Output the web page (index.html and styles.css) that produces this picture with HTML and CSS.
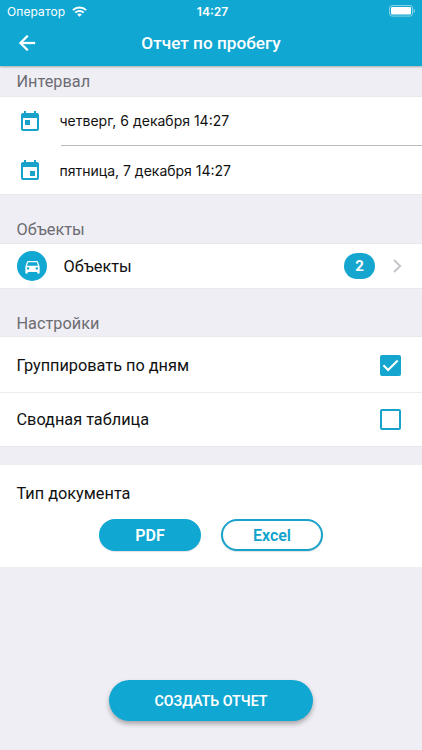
FILE: index.html
```html
<!DOCTYPE html>
<html lang="ru">
<head>
<meta charset="utf-8">
<title>Отчет по пробегу</title>
<link rel="stylesheet" href="styles.css">
</head>
<body>
<header class="header">
  <div class="status">
    <div class="carrier"><span>Оператор</span>
      <svg width="15" height="11" viewBox="0 0 15 11" fill="none" stroke="#fff" stroke-width="2"><path d="M.9 4.1a9.4 9.4 0 0 1 13.2 0M3.3 6.6a6 6 0 0 1 8.4 0"/><path d="M7.5 10.8 5.2 8.5a3.3 3.3 0 0 1 4.6 0z" fill="#fff" stroke="none"/></svg>
    </div>
    <span class="clock">14:27</span>
    <svg class="battery" width="27" height="12" viewBox="0 0 27 12"><rect x=".5" y=".5" width="23" height="10.6" rx="2.5" fill="none" stroke="#fff" stroke-opacity=".5"/><rect x="2" y="2" width="20" height="7.6" rx="1" fill="#fff"/><path d="M24.7 4v4q1.4-.5 1.4-2t-1.4-2z" fill="#fff" fill-opacity=".5"/></svg>
  </div>
  <div class="nav">
    <svg class="back" width="24" height="24" viewBox="0 0 24 24" fill="#fff" stroke="#fff" stroke-width=".3"><path d="M20 11H7.83l5.59-5.59L12 4l-8 8 8 8 1.41-1.41L7.83 13H20v-2z"/></svg>
    <h1>Отчет по пробегу</h1>
  </div>
</header>
<main>
  <h2 class="label label-first">Интервал</h2>
  <section class="dates">
    <div class="date">
      <svg width="24" height="24" viewBox="0 0 24 24"><path d="M19 3h-1V1h-2v2H8V1H6v2H5c-1.11 0-1.99.9-1.99 2L3 19c0 1.1.89 2 2 2h14c1.1 0 2-.9 2-2V5c0-1.1-.9-2-2-2zm0 16H5V8h14v11zM7 10h5v5H7z"/></svg>
      <span>четверг, 6 декабря 14:27</span>
    </div>
    <div class="date date-end">
      <svg width="24" height="24" viewBox="0 0 24 24"><path d="M17 12h-5v5h5v-5zM16 1v2H8V1H6v2H5c-1.11 0-1.99.9-1.99 2L3 19c0 1.1.89 2 2 2h14c1.1 0 2-.9 2-2V5c0-1.1-.9-2-2-2h-1V1h-2zm3 18H5V8h14v11z"/></svg>
      <span>пятница, 7 декабря 14:27</span>
    </div>
  </section>
  <h2 class="label label-objects">Объекты</h2>
  <section class="objects">
    <span class="avatar"><svg width="19" height="19" viewBox="0 0 24 24" fill="#fff"><path d="M18.92 6.01C18.72 5.42 18.16 5 17.5 5h-11c-.66 0-1.21.42-1.42 1.01L3 12v8c0 .55.45 1 1 1h1c.55 0 1-.45 1-1v-1h12v1c0 .55.45 1 1 1h1c.55 0 1-.45 1-1v-8l-2.08-5.99zM6.5 16c-.83 0-1.5-.67-1.5-1.5S5.67 13 6.5 13s1.5.67 1.5 1.5S7.33 16 6.5 16zm11 0c-.83 0-1.5-.67-1.5-1.5s.67-1.5 1.5-1.5 1.5.67 1.5 1.5-.67 1.5-1.5 1.5zM5 11l1.5-4.5h11L19 11H5z"/></svg></span>
    <span class="objects-name">Объекты</span>
    <span class="count">2</span>
    <svg class="chevron" width="9" height="14" viewBox="0 0 9 14" fill="none" stroke="#c4c4c9" stroke-width="1.9"><path d="M1 1l6.2 6L1 13"/></svg>
  </section>
  <h2 class="label label-settings">Настройки</h2>
  <section class="settings">
    <div class="option"><span>Группировать по дням</span><span class="check checked"><svg width="21" height="21" viewBox="0 0 21 21" fill="none" stroke="#fff" stroke-width="2.1"><path d="M3.4 10.3l4.7 4.8 9.6-9.7"/></svg></span></div>
    <div class="option"><span>Сводная таблица</span><span class="check"></span></div>
  </section>
  <section class="doctype">
    <div class="doctype-title">Тип документа</div>
    <div class="choices"><button class="pill selected">PDF</button><button class="pill">Excel</button></div>
  </section>
  <button class="create">СОЗДАТЬ ОТЧЕТ</button>
</main>
</body>
</html>
```
FILE: styles.css
```css
* { box-sizing: border-box; }
body { margin: 0; width: 422px; height: 750px; overflow: hidden; background: #efeef4; font-family: Roboto, sans-serif; color: #111; font-size: 16.3px; }
h1, h2 { margin: 0; }
svg { display: block; flex: none; }
span { white-space: nowrap; }
button { border: 0; font-family: inherit; padding: 0; }
.header { position: relative; height: 65.5px; background: #10a7d2; color: #fff; box-shadow: 0 1px 2px rgba(0,0,0,.3); }
.status { height: 22px; display: grid; grid-template-columns: 1fr auto 1fr; align-items: center; padding: 0 6px 0 7px; font-family: Inter, sans-serif; font-size: 12px; }
.carrier { display: flex; align-items: center; gap: 7px; letter-spacing: .1px; }
.clock { font-weight: 600; padding-left: 2px; }
.battery { justify-self: end; }
.nav { height: 42px; display: grid; grid-template-columns: 24px 1fr 24px; align-items: center; padding: 0 15px; }
h1 { font-size: 17.2px; font-weight: 500; text-align: center; line-height: 24px; }
.label { height: 49px; padding: 20px 16.5px 0; font-size: 16.3px; line-height: 30px; font-weight: 400; color: #6c6c72; }
.label-first { height: 31.5px; padding-top: 1px; }
.label-objects { height: 50px; padding-top: 21px; }
.label-settings { padding-top: 21px; }
.dates, .objects, .settings, .doctype { background: #fff; box-shadow: 0 0 0 1px #e9e8ed; }
.dates { height: 97px; font-family: Inter, sans-serif; font-size: 14px; }
.date { height: 49px; display: flex; align-items: center; padding-left: 18px; gap: 17.5px; fill: #18a1c9; }
.date span { flex: 1; line-height: 48px; height: 49px; }
.date:first-child { background: linear-gradient(#bbb, #bbb) 61px 100% / 100% 1px no-repeat; }
.date-end { height: 50px; }
.date-end span { height: 50px; line-height: 50px; }
.objects { height: 44px; display: flex; align-items: center; padding: 0 20px 0 17px; }
.avatar { width: 30px; height: 30px; border-radius: 50%; background: #10a7d2; display: grid; place-items: center; }
.objects-name { margin-left: 16.5px; flex: 1; padding-top: 1px; }
.count { width: 31px; height: 26px; border-radius: 13px; background: #14a6cf; color: #fff; font-size: 15px; font-weight: 700; line-height: 27px; text-align: center; }
.chevron { margin-left: 18px; }
.settings { height: 109px; }
.option { height: 55px; display: flex; align-items: center; justify-content: space-between; padding: 1px 21px 0 16.5px; }
.option + .option { height: 54px; padding-top: 0; border-top: 1px solid #ececee; }
.check { width: 21px; height: 21px; border: 2px solid #18a1c9; border-radius: 2px; }
.checked { border: 0; background: #14a6cf; }
.doctype { margin-top: 19px; height: 102px; padding-top: 17px; box-shadow: none; }
.doctype-title { padding-left: 16.5px; line-height: 24px; }
.choices { display: flex; justify-content: center; gap: 20px; margin-top: 13px; }
.pill { width: 102px; height: 32px; border-radius: 16px; border: 2px solid #18a1c9; background: #fff; color: #10a3cd; font-size: 16px; font-weight: 600; box-shadow: 0 1px 1px rgba(0,0,0,.12); }
.selected { background: #10a7d2; color: #fff; border-color: #10a7d2; }
.create { display: block; width: 204px; height: 41px; margin: 113px auto 0 109px; border-radius: 21px; background: #10a7d2; color: #fff; font-size: 14.2px; font-weight: 600; box-shadow: 0 3px 5px rgba(0,0,0,.3); }
```
